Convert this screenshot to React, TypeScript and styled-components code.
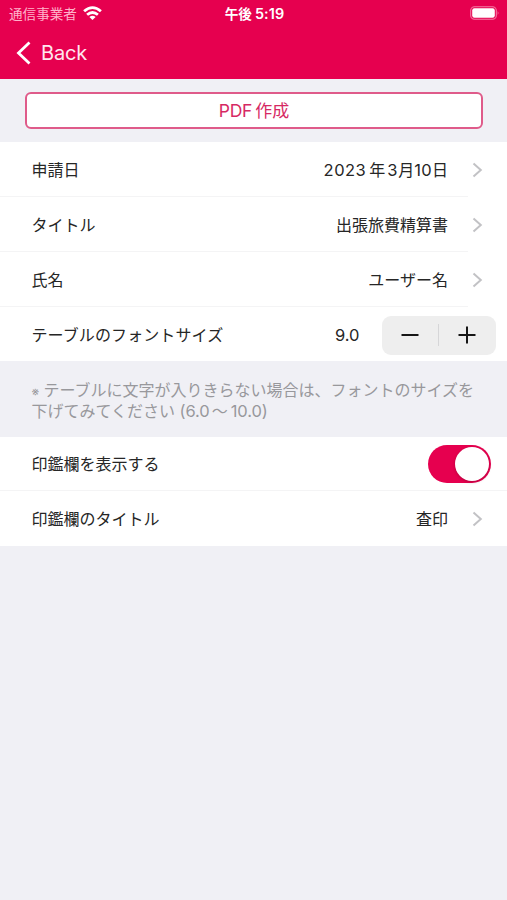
import React, { useState } from "react";
import styled, { createGlobalStyle } from "styled-components";

const ACCENT = "#e6004f";

const GlobalStyle = createGlobalStyle`
  * { box-sizing: border-box; }
  body {
    margin: 0;
    background: #f0f0f5;
    font-family: Inter, "Noto Sans CJK JP", sans-serif;
    color: #262626;
  }
  button { font-family: inherit; color: inherit; border: 0; padding: 0; background: none; }
`;

const Screen = styled.main`
  display: flex;
  flex-direction: column;
  width: 507px;
  height: 900px;
  overflow: hidden;
  background: #f0f0f5;
`;

const Header = styled.header`
  height: 79px;
  background: ${ACCENT};
  color: #fff;
`;

const StatusBar = styled.div`
  display: grid;
  grid-template-columns: 1fr auto 1fr;
  align-items: center;
  height: 27px;
  padding: 0 7px 0 9px;
`;

const Carrier = styled.div`
  display: flex;
  align-items: center;
  gap: 6px;
  font-size: 13.6px;
  line-height: 20px;
  color: #ffb3cb;
`;

const Clock = styled.div`
  display: flex;
  align-items: center;
  font-size: 13.6px;
  font-weight: 600;
  line-height: 20px;
  gap: 3px;
`;

const Battery = styled.div`
  display: flex;
  justify-content: flex-end;
  padding-bottom: 1px;
`;

const BackButton = styled.button`
  display: flex;
  align-items: center;
  gap: 10px;
  height: 51px;
  padding-left: 16px;
  font-size: 20px;
  letter-spacing: -0.15px;
  color: #ffe6ee;
`;

const Actions = styled.section`
  height: 63px;
  padding: 13px 24px 0 25px;
`;

const CreateButton = styled.button`
  display: flex;
  align-items: center;
  justify-content: center;
  gap: 3px;
  width: 100%;
  height: 37px;
  border: 2px solid #df5b8a;
  border-radius: 6px;
  background: #fff;
  color: #d62963;
  font-size: 17px;
  line-height: 20px;
`;

const Latin = styled.span<{ $spacing?: number; $size?: number }>`
  letter-spacing: ${(p) => p.$spacing ?? 0}px;
  font-size: ${(p) => (p.$size ? `${p.$size}px` : "inherit")};
`;

const Group = styled.section`
  background: #fff;
`;

const Row = styled.div<{ $height?: number; $inset?: number; $right?: number; $top?: number }>`
  display: flex;
  align-items: center;
  height: ${(p) => p.$height ?? 55}px;
  padding: ${(p) => p.$top ?? 0}px ${(p) => p.$right ?? 24}px 0 31.5px;
  font-size: 16px;
  line-height: 24px;
  background: linear-gradient(#f4f4f5, #f4f4f5) left bottom / calc(100% - ${(p) => p.$inset ?? 39}px) 1px no-repeat;

  &:last-child { background: none; }
`;

const Label = styled.span<{ $spacing?: number }>`
  flex: 1;
  letter-spacing: ${(p) => p.$spacing ?? 0}px;
`;

const Value = styled.span`
  display: flex;
  align-items: center;
  margin-right: 24px;
`;

const Year = styled.span`
  padding: 0 2px 0 3px;
`;

const SizeValue = styled.span`
  margin-right: 22px;
  font-size: 16.5px;
`;

const Stepper = styled.div`
  display: grid;
  grid-template-columns: 1fr 1px 1fr;
  align-items: center;
  width: 114px;
  height: 39px;
  border-radius: 9px;
  background: #eee;
`;

const StepButton = styled.button`
  display: flex;
  align-items: center;
  justify-content: center;
  height: 39px;
`;

const StepDivider = styled.span`
  height: 22px;
  background: #d6d6d8;
`;

const Note = styled.p`
  height: 76px;
  margin: 0;
  padding: 19px 0 0 31.5px;
  font-size: 16px;
  line-height: 20px;
  color: #98989c;
  white-space: nowrap;
`;

const NoteMark = styled.span`
  display: inline-block;
  width: 12px;
  line-height: 1;
`;

const Tilde = styled.span`
  padding: 0 3px 0 2px;
  font-family: "Noto Sans CJK JP", sans-serif;
`;

const Toggle = styled.button<{ $on: boolean }>`
  display: flex;
  align-items: center;
  justify-content: ${(p) => (p.$on ? "flex-end" : "flex-start")};
  width: 63px;
  height: 38px;
  padding: 2px;
  border-radius: 19px;
  background: ${(p) => (p.$on ? ACCENT : "#e9e9eb")};
`;

const Knob = styled.span`
  width: 34px;
  height: 34px;
  border-radius: 50%;
  background: #fff;
  box-shadow: 0 1px 3px rgba(90, 0, 30, 0.35);
`;

const Icon = styled.svg`
  display: block;
  flex: none;
`;

const Chevron = () => (
  <Icon width="11" height="16" viewBox="0 0 11 16" fill="none" stroke="#c2c2c5" strokeWidth="2">
    <path d="M1.5 1.5 L8.8 8 L1.5 14.5" />
  </Icon>
);

const WifiIcon = () => (
  <Icon width="19" height="16" viewBox="0 0 19 16" fill="none" stroke="#fff" strokeWidth="2.8">
    <path d="M1.1 5.3 Q9.5 -2.1 17.9 5.3" />
    <path d="M4.1 8.8 Q9.5 4.2 14.9 8.8" />
    <path d="M6.4 10.9 Q9.5 8.6 12.6 10.9 L9.5 14.1 Z" fill="#fff" stroke="none" />
  </Icon>
);

const BatteryIcon = () => (
  <Icon width="30" height="14" viewBox="0 0 30 14" fill="none">
    <rect x="0.7" y="0.7" width="25.6" height="12.6" rx="3.8" stroke="#f57aa4" strokeWidth="1.1" />
    <rect x="2.2" y="2.2" width="22.6" height="9.6" rx="2.2" fill="#fff" />
    <path d="M27.7 5 Q29.4 7 27.7 9 Z" fill="#f57aa4" />
  </Icon>
);

export default function App() {
  const [size, setSize] = useState(9);
  const [showStamp, setShowStamp] = useState(true);

  return (
    <>
      <GlobalStyle />
      <Screen lang="ja">
        <Header>
          <StatusBar>
            <Carrier>通信事業者<WifiIcon /></Carrier>
            <Clock><span>午後</span><Latin $size={14.4} $spacing={0.1}>5:19</Latin></Clock>
            <Battery><BatteryIcon /></Battery>
          </StatusBar>
          <BackButton>
            <Icon width="15" height="24" viewBox="0 0 15 24" fill="none" stroke="#fff" strokeWidth="2.8">
              <path d="M13.5 1.5 L2.5 12 L13.5 22.5" />
            </Icon>
            Back
          </BackButton>
        </Header>
        <Actions>
          <CreateButton><Latin $size={17.5} $spacing={-0.2}>PDF</Latin><span>作成</span></CreateButton>
        </Actions>
        <Group>
          <Row>
            <Label>申請日</Label>
            <Value>
              <Latin $size={16.5} $spacing={0.5}>2023</Latin><Year>年</Year><Latin $size={16.5} $spacing={0.7}>3</Latin>月<Latin $size={16.5} $spacing={0.3}>10</Latin>日
            </Value>
            <Chevron />
          </Row>
          <Row>
            <Label>タイトル</Label>
            <Value>出張旅費精算書</Value>
            <Chevron />
          </Row>
          <Row>
            <Label>氏名</Label>
            <Value>ユーザー名</Value>
            <Chevron />
          </Row>
          <Row $height={54} $right={11.5} $top={2}>
            <Label $spacing={0.1}>テーブルのフォントサイズ</Label>
            <SizeValue>{size.toFixed(1)}</SizeValue>
            <Stepper>
              <StepButton aria-label="−" onClick={() => setSize((s) => Math.max(6, s - 0.5))}>
                <Icon width="18" height="18" viewBox="0 0 18 18" stroke="#161616" strokeWidth="2">
                  <path d="M0.5 9 H17.5" />
                </Icon>
              </StepButton>
              <StepDivider />
              <StepButton aria-label="+" onClick={() => setSize((s) => Math.min(10, s + 0.5))}>
                <Icon width="18" height="18" viewBox="0 0 18 18" stroke="#161616" strokeWidth="2">
                  <path d="M0.5 9 H17.5 M9 0.5 V17.5" />
                </Icon>
              </StepButton>
            </Stepper>
          </Row>
        </Group>
        <Note>
          <NoteMark><Latin $size={12}>※</Latin></NoteMark>テーブルに文字が入りきらない場合は、フォントのサイズを
          <br />
          下げてみてください<Latin $size={16.5} $spacing={-0.1}> (6.0</Latin><Tilde>～</Tilde><Latin $size={16.5} $spacing={-0.1}>10.0)</Latin>
        </Note>
        <Group>
          <Row $height={54} $inset={0} $right={16}>
            <Label>印鑑欄を表示する</Label>
            <Toggle $on={showStamp} role="switch" aria-checked={showStamp} onClick={() => setShowStamp((v) => !v)}>
              <Knob />
            </Toggle>
          </Row>
          <Row>
            <Label>印鑑欄のタイトル</Label>
            <Value>査印</Value>
            <Chevron />
          </Row>
        </Group>
      </Screen>
    </>
  );
}
